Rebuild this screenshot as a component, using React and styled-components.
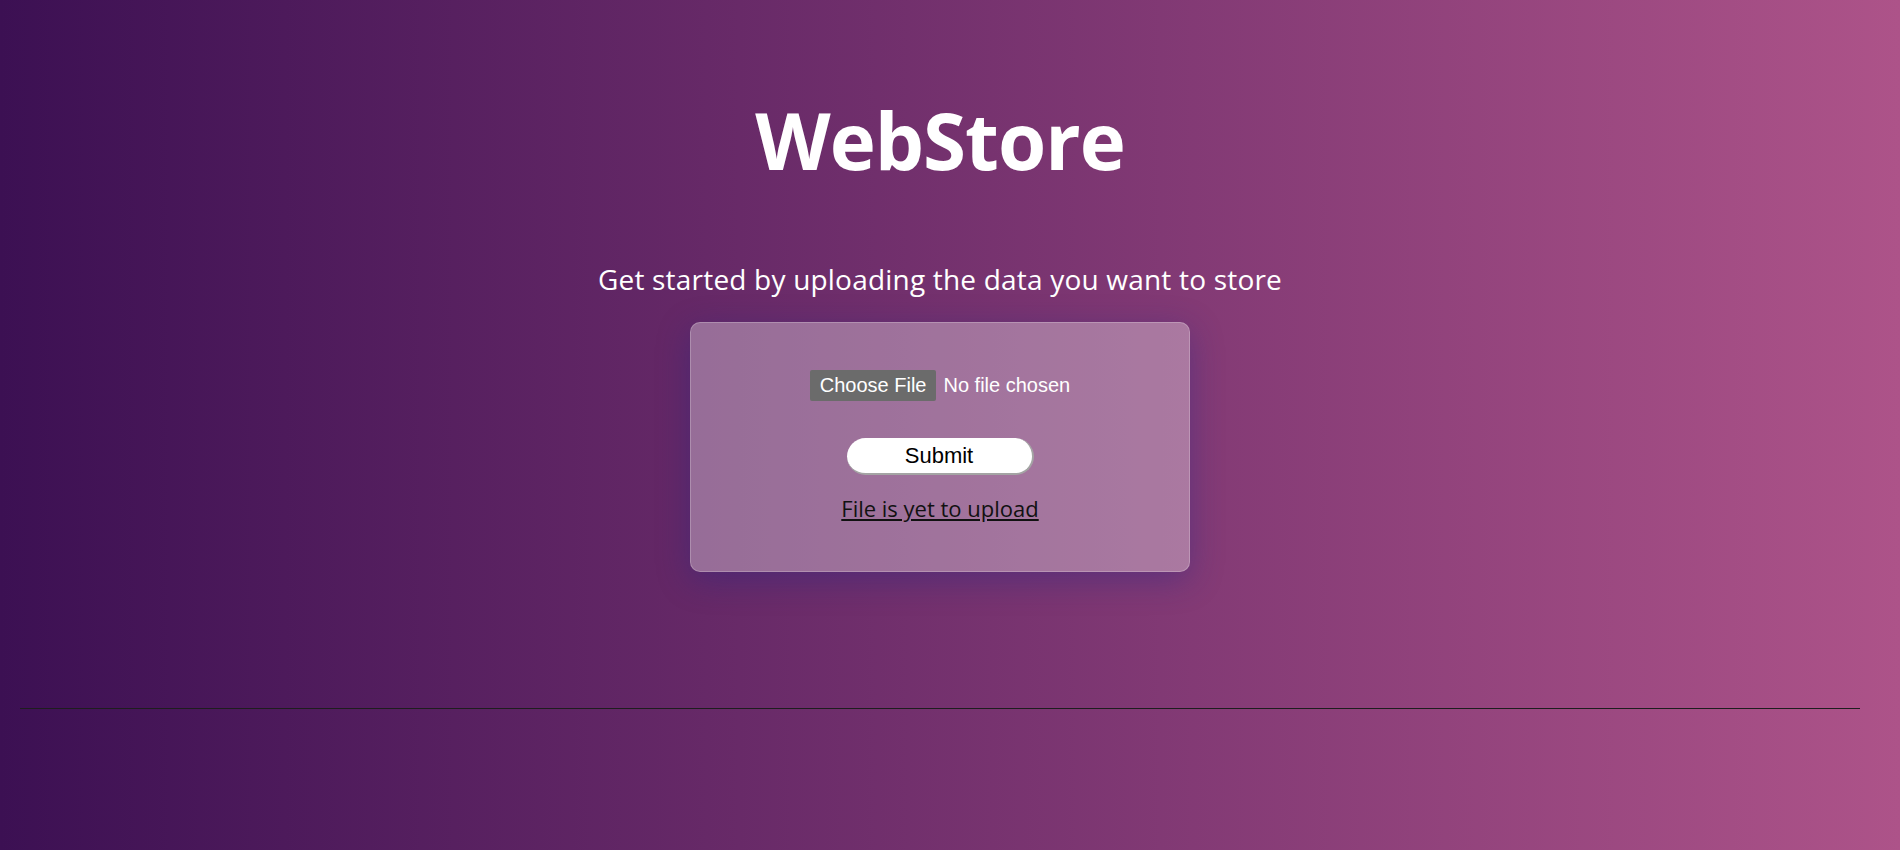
import React from "react";
import styled, { createGlobalStyle } from "styled-components";

const GlobalStyle = createGlobalStyle`
  html, body {
    margin: 0;
    padding: 0;
  }
  body {
    min-height: 100vh;
    background: linear-gradient(to right, #3c1053, #ad5389);
    font-family: "Open Sans", "Noto Sans", sans-serif;
    color: #fff;
  }
`;

const Page = styled.main`
  box-sizing: border-box;
  min-height: 100vh;
  padding: 0 40px 0 20px;
  display: flex;
  flex-direction: column;
  align-items: center;
`;

const Title = styled.h1`
  margin: 92px 0 0;
  font-size: 78px;
  line-height: 96px;
  font-weight: 700;
  color: #fff;
  letter-spacing: -1px;
`;

const Subtitle = styled.p`
  margin: 75px 0 0;
  font-size: 28px;
  line-height: 32px;
  font-weight: 400;
  letter-spacing: 0.2px;
  color: #fff;
`;

const Card = styled.form`
  box-sizing: border-box;
  margin-top: 27px;
  width: 500px;
  height: 250px;
  padding-top: 47px;
  display: flex;
  flex-direction: column;
  align-items: center;
  background: rgba(255, 255, 255, 0.32);
  border: 1px solid rgba(255, 255, 255, 0.22);
  border-radius: 10px;
  box-shadow: 0 8px 32px 0 rgba(31, 38, 135, 0.37);
`;

const FileRow = styled.label`
  display: flex;
  align-items: center;
  gap: 7px;
  font-family: "Liberation Sans", Arial, sans-serif;
  font-size: 20px;
  color: #fff;
  cursor: pointer;
`;

const HiddenInput = styled.input`
  display: none;
`;

const ChooseButton = styled.span`
  box-sizing: border-box;
  height: 31px;
  padding: 0 10px;
  display: inline-flex;
  align-items: center;
  background: #6b6b6b;
  border-radius: 2px;
  color: #fff;
`;

const FileName = styled.span`
  color: #fff;
`;

const SubmitButton = styled.button`
  box-sizing: border-box;
  margin-top: 37px;
  width: 187px;
  height: 37px;
  border-radius: 19px;
  border-style: solid;
  border-width: 0 2px 2px 0;
  border-color: #a4a4a4;
  background: #fff;
  font-family: "Liberation Sans", Arial, sans-serif;
  font-size: 22px;
  color: #000;
  cursor: pointer;
  padding: 0;
`;

const Status = styled.a`
  margin-top: 18px;
  font-size: 22px;
  line-height: 30px;
  color: #111;
  text-decoration: underline;
`;

const Divider = styled.hr`
  align-self: stretch;
  margin: 136px 0 0;
  border: none;
  border-top: 1px solid #1e1e1e;
  height: 0;
`;

export default function App() {
  return (
    <>
      <GlobalStyle />
      <Page>
        <Title>WebStore</Title>
        <Subtitle>Get started by uploading the data you want to store</Subtitle>
        <Card onSubmit={(e) => e.preventDefault()}>
          <FileRow>
            <HiddenInput type="file" />
            <ChooseButton>Choose File</ChooseButton>
            <FileName>No file chosen</FileName>
          </FileRow>
          <SubmitButton type="submit">Submit</SubmitButton>
          <Status href="#">File is yet to upload</Status>
        </Card>
        <Divider />
      </Page>
    </>
  );
}
